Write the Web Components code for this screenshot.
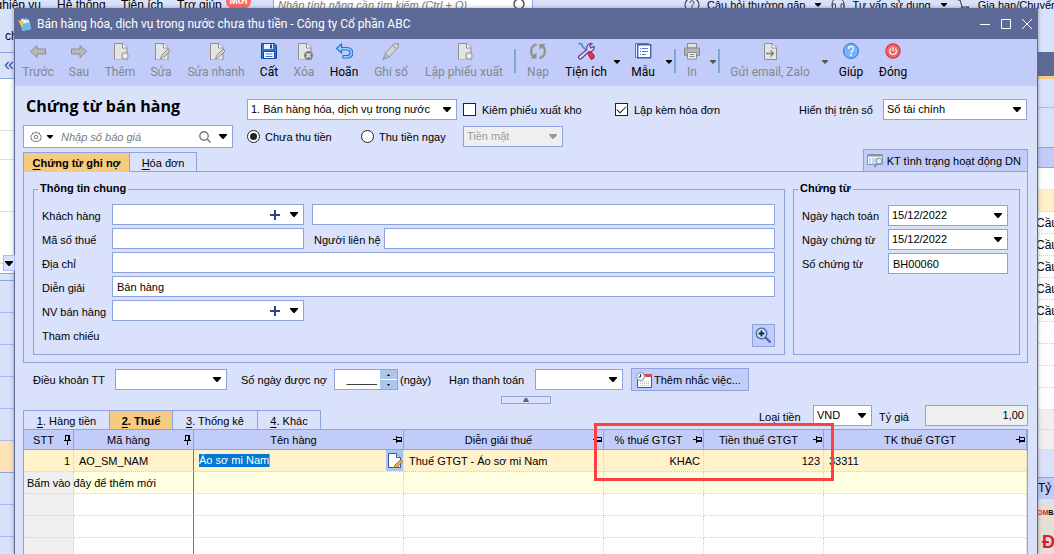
<!DOCTYPE html>
<html lang="vi">
<head>
<meta charset="utf-8">
<title>Bán hàng hóa, dịch vụ trong nước chưa thu tiền</title>
<style>
  :root {
    --ui: "Liberation Sans", Arial, sans-serif;
    --segoe: "Open Sans", "Noto Sans", sans-serif;
    --compact: Roboto, "Open Sans", sans-serif;
    --line: #8ea2e0;
    --face: #dae1fa;
    --bar: #c1cdf8;
    --title: #5d6a98;
    --amber: #f5cb80;
  }
  html, body { height: 100%; }
  body { margin: 0; overflow: hidden; font: 11px/14px var(--ui); color: #000; background: #fff; }
</style>
</head>
<body>
<main-desktop>
  <backdrop-app slot="back"></backdrop-app>
  <app-window caption="Bán hàng hóa, dịch vụ trong nước chưa thu tiền - Công ty Cổ phần ABC">
    <tool-bar slot="tools">
      <tool-item icon="prev" label="Trước" w="40" off></tool-item>
      <tool-item icon="next" label="Sau" w="42" off></tool-item>
      <tool-item icon="add" label="Thêm" w="40" off></tool-item>
      <tool-item icon="edit" label="Sửa" w="42" off></tool-item>
      <tool-item icon="edit" label="Sửa nhanh" w="68" off></tool-item>
      <tool-item icon="save" label="Cất" w="38"></tool-item>
      <tool-item icon="del" label="Xóa" w="32" off></tool-item>
      <tool-item icon="undo" label="Hoãn" w="48"></tool-item>
      <tool-item icon="pen" label="Ghi sổ" w="46" off></tool-item>
      <tool-item icon="add" label="Lập phiếu xuất" w="100" off></tool-item>
      <tool-sep></tool-sep>
      <tool-item icon="reload" label="Nạp" w="44" off></tool-item>
      <tool-item icon="tools" label="Tiện ích" w="52" menu></tool-item>
      <tool-item icon="form" label="Mẫu" w="42" menu></tool-item>
      <tool-sep></tool-sep>
      <tool-item icon="print" label="In" w="32" off menu></tool-item>
      <tool-sep></tool-sep>
      <tool-item icon="send" label="Gửi email, Zalo" w="100" off menu></tool-item>
      <tool-item icon="help" label="Giúp" w="42"></tool-item>
      <tool-item icon="power" label="Đóng" w="42"></tool-item>
    </tool-bar>
    <voucher-head></voucher-head>
    <voucher-info></voucher-info>
    <payment-terms></payment-terms>
    <detail-tabs></detail-tabs>
    <tax-grid></tax-grid>
  </app-window>
</main-desktop>

<script>
const BASE = `
  *, *::before, *::after { box-sizing: border-box; }
  button, input, select { font: inherit; color: inherit; margin: 0; }
  button { border: 0; padding: 0; background: none; display: flex; align-items: center; white-space: nowrap; }
  svg { display: block; flex: none; }
  u { text-underline-offset: 2px; }
`;

class Part extends HTMLElement {
  connectedCallback() {
    if (this.shadowRoot) return;
    const root = this.attachShadow({ mode: 'open' });
    root.innerHTML = `<style>${BASE}${this.css()}</style>${this.html()}`;
  }
  css() { return ':host{display:block}'; }
  html() { return '<slot></slot>'; }
  at(name, fallback = '') { return this.hasAttribute(name) ? this.getAttribute(name) : fallback; }
}

const caret = (color = '#000') =>
  `<svg width="8" height="5" viewBox="0 0 8 5" aria-hidden="true"><path d="M0 0h8v1L4.500 5h-1L0 1z" fill="${color}"/></svg>`;
const smallCaret = (color = '#000') =>
  `<svg width="6" height="4" viewBox="0 0 6 4" aria-hidden="true"><path d="M0 0h6v1L3 4 0 1z" fill="${color}"/></svg>`;

const PAGE = '<path d="M3.500 1.500h8.500l4 4v12.500h-12.500z" fill="#e4e4e4" stroke="#8f8f8f"/><path d="M11.500 1.500v4.500h4.500" fill="#fff" stroke="#8f8f8f"/>';
const ICONS = {
  prev: '<path d="M1.500 9.500 8 3.500v3.500h8.500v5H8v3.500z" fill="#b8b8b8" stroke="#8d8d8d"/>',
  next: '<path d="M16.500 9.500 10 3.500v3.500H1.500v5H10v3.500z" fill="#b8b8b8" stroke="#8d8d8d"/>',
  add: PAGE + '<circle cx="14" cy="14" r="3.200" fill="#ececec" stroke="#adadad" stroke-width="1.500"/>',
  edit: PAGE + '<path d="M8.500 17l1-3.500 6.500-6.500 2 2-6.500 6.500z" fill="#cfcfcf" stroke="#8f8f8f"/>',
  del: PAGE + '<circle cx="13.500" cy="13.500" r="4.500" fill="#7f7f7f"/><path d="M11.500 11.500l4 4m0-4l-4 4" stroke="#eee" stroke-width="1.300"/>',
  save: '<path d="M1.500 1.500h13l2 2v13H1.500z" fill="#2f6fd8" stroke="#1048ac"/><path d="M4 2h9v5H4z" fill="#e9f1ff"/><path d="M10 2.500h2v4h-2z" fill="#1048ac"/><path d="M3.500 9.500h11v7H3.500z" fill="#fff" stroke="#1048ac"/><path d="M5.500 12h7M5.500 14.500h7" stroke="#3c74d0"/>',
  undo: '<path d="M6.500 2 1.500 6.500 6.500 11V8h5.500c4 0 4 5.500 0 5.500H8V16h4.500c7.500 0 7-10.500-.5-10.500H6.500z" fill="#9dccff" stroke="#2374d6" stroke-width="1.200"/>',
  pen: '<path d="M1 17.500l2.500-6.500L12 2l4.500-.5-.5 4L7 15z" fill="#d4d4d4" stroke="#929292"/><path d="M3.500 11l3.500 4M10.500 3.500l4 3.500M1 17.500l4-4" stroke="#929292" fill="none"/>',
  reload: '<path d="M7.500 2.500C1.500 4 1 11.500 4.500 14.500" fill="none" stroke="#8f8f8f" stroke-width="2.600"/><path d="M10.500 16C16.500 14.500 17 7 13.500 4" fill="none" stroke="#8f8f8f" stroke-width="2.600"/><path d="M1.500 16.500h6v-6zM16.500 2h-6v6z" fill="#8f8f8f"/><path d="M6.500 3.500C3 5.500 2.500 10.500 4.500 13M11.500 15C15 13 15.500 8 13.500 5.500" fill="none" stroke="#c4c4c4" stroke-width=".8"/>',
  tools: '<path d="M10 10l2-1.500 5 4.500v3l-3 1.500z" fill="#e8353b" stroke="#a81d2d"/><path d="M1.500 1.500l3 .5 1 2.500L11 10" fill="none" stroke="#5a93dc" stroke-width="2"/><path d="M2 14 10 7.500C9 3.500 11.500 1 15 1.500L12.500 4l1.500 2 3-1.500c.5 3.500-2 5.500-5 5L4.500 16.500c-2 1.500-4-1-2.500-2.500z" fill="#e3d9f5" stroke="#6a3f9c" stroke-width="1.200"/>',
  form: '<path d="M1.500 1.500h13v14h-13z" fill="#e9f0ff" stroke="#4d72c8"/><path d="M3.700 2.700h13v13h-13z" fill="#fff" stroke="#3a60bd" stroke-width="1.400"/><path d="M6 6.500h1m1 0h6M6 9.500h1m1 0h6M6 12.500h1m1 0h4" stroke="#5b7fd4"/>',
  print: '<path d="M4.500 1.500h9V6h-9z" fill="#e2e2e2" stroke="#8d8d8d"/><path d="M1.500 6h15v7.500h-15z" fill="#b4b4b4" stroke="#8a8a8a"/><path d="M4.500 10.500h9v6.500h-9z" fill="#eee" stroke="#8d8d8d"/><path d="M6.500 12.500h5M6.500 14.500h5M3 8h2" stroke="#8d8d8d"/>',
  send: '<path d="M3.500 1.500h8l4 4v12h-12z" fill="#e4e4e4" stroke="#8f8f8f"/><path d="M11 1.500v4.500h4.500" fill="#fff" stroke="#8f8f8f"/><path d="M5 11.500h7M9.500 8.500l3 3-3 3" fill="none" stroke="#7d7d7d" stroke-width="1.300"/>',
  help: '<circle cx="9" cy="9" r="7.500" fill="#74b4fb" stroke="#2c74cf"/><path d="M6.500 7c0-3.500 5-3.300 5-.3 0 2-2.500 2-2.500 4.300" fill="none" stroke="#fff" stroke-width="1.300"/><circle cx="9" cy="13" r=".9" fill="#fff"/>',
  power: '<circle cx="9" cy="9" r="7" fill="#f4696c" stroke="#e5383d" stroke-width="1.400"/><path d="M6.700 6.500c-2.500 2.500-.7 6 2.300 6s4.800-3.500 2.300-6M9 5v4" fill="none" stroke="#fff" stroke-width="1.200"/>'
};

customElements.define('main-desktop', class extends Part {
  css() { return `
    :host { display: block; position: relative; height: 100vh; overflow: hidden; }
    .front { position: absolute; inset: 8px 16px 0 14px; }`; }
  html() { return '<slot name="back"></slot><div class="front"><slot></slot></div>'; }
});

customElements.define('backdrop-app', class extends Part {
  css() { return `
    :host { display: flex; flex-direction: column; height: 100%; background: #fff; }
    header { display: flex; align-items: center; height: 9px; flex: none; background: var(--face);
      font: 12px/14px var(--ui); white-space: nowrap; }
    header span { flex: none; }
    .m1 { width: 57px; display: flex; justify-content: flex-end; padding-right: 16px; }
    .m2 { width: 64px; } .m3 { width: 56px; } .m4 { width: 49px; }
    .new { width: 25px; height: 17px; margin-top: -8px; border-radius: 8px; background: #ff6b63; color: #fff;
      font: bold 10px/17px var(--ui); text-align: center; }
    .find { display: flex; align-items: center; justify-content: space-between; width: 260px; height: 9px; margin-left: 22px; padding: 0 6px 0 4px;
      background: #fff; border: solid var(--line); border-width: 0 1px; color: #777; font-size: 11px; font-style: italic; }
    .links { display: flex; align-items: center; gap: 7px; margin-left: auto; flex: none; width: 370px; font-size: 11px; }
    .links .gap { margin: 0 3px; }
    .sides { flex: 1; display: flex; justify-content: space-between; min-height: 0; overflow: hidden; }
    .left, .right { white-space: nowrap; background: var(--face); }
    .left { width: 15px; }
    .right { width: 17px; font-size: 12px; }
    .left div, .right div { border-bottom: 1px solid #c5cce8; }
    .crumb { height: 44px; padding: 20px 0 0 5px; font-size: 12px; }
    .left .crumb, .left .fold { border-color: var(--line); }
    .fold { height: 26px; padding: 4px 0 0 4px; color: #3559b8; font-size: 18px; line-height: 14px; }
    .left .w { height: 52px; background: #fff; border-color: #ddd; }
    .left .w.short { height: 29px; }
    .left .w.last { height: 10px; border-color: var(--line); }
    .left .drop { display: flex; align-items: center; justify-content: flex-end; width: 12px; height: 16px; margin: -9px 0 -7px 3px; padding-right: 1px;
      background: var(--face); border: 1px solid #aab9ee; position: relative; z-index: 1; overflow: hidden; }
    .left .r { height: 32px; border-color: #aab9ee; }
    .left .r.thin { height: 7px; border-color: var(--line); }
    .left .r.on { background: #ffe3b8; border-color: var(--line); }
    .right .t0 { height: 43px; border: 0; }
    .right .t1 { height: 27px; background: var(--title); border-bottom: 3px solid var(--amber); }
    .right .t2 { height: 29px; border-color: #aab9ee; }
    .right .t3 { height: 40px; border-color: var(--line); }
    .right .t4 { height: 20px; background: var(--bar); border-color: var(--line); }
    .right .row { height: 22px; padding: 3px 0 0 1px; line-height: 16px; background: #fff; border-bottom: 1px dotted #ccc; text-indent: -2px; }
    .right .row.on { background: #fff0c8; }
    .right .row.gray { height: 20px; background: #f0f0f0; }
    .right .t5 { height: 28px; border-color: var(--line); }
    .right .t6 { height: 21px; background: var(--bar); padding-left: 1px; line-height: 20px; }
    .ad { height: 80px; margin-top: 4px; background: #e6dfd5; font: bold 7px/20px var(--ui); }
    .ad b { color: #e3182d; }
    .ad p { margin: 10px 0 0 5px; color: #e3182d; font: bold 18px/18px var(--ui); }`; }
  html() { return `
    <header>
      <span class="m1">Nghiệp vụ</span><span class="m2">Hệ thống</span><span class="m3">Tiện ích</span><span class="m4">Trợ giúp</span>
      <span class="new">Mới</span>
      <span class="find">Nhập tính năng cần tìm kiếm (Ctrl + Q)
        <svg width="14" height="14" viewBox="0 0 14 14"><circle cx="7" cy="6" r="5" fill="none" stroke="#555" stroke-width="1.500"/><path d="M10.500 9.500l3 3" stroke="#555"/></svg></span>
      <div class="links">
        <svg width="16" height="16" viewBox="0 0 16 16"><circle cx="8" cy="8" r="7" fill="none" stroke="#444" stroke-width="1.200"/><path d="M6 6c0-3 4-3 4 0 0 1.500-2 1.500-2 3v2" fill="none" stroke="#444"/></svg>
        <span>Câu hỏi thường gặp</span><i class="gap">${smallCaret()}</i>
        <svg width="14" height="14" viewBox="0 0 14 14"><path d="M1 9V6a6 6 0 0 1 12 0v5l-4 2M1.500 6h3v5h-3zM10 6h3v5h-3z" fill="none" stroke="#444"/></svg>
        <span>Tư vấn sử dụng</span><i class="gap">${smallCaret()}</i>
        <svg width="14" height="14" viewBox="0 0 14 14"><path d="M1 2h2l2 7h7" fill="none" stroke="#333"/><circle cx="5" cy="11" r="1.500" fill="none" stroke="#333"/><circle cx="11" cy="11" r="1.500" fill="none" stroke="#333"/></svg>
        <span>Gia hạn/Chuyển đổi</span>
      </div>
    </header>
    <div class="sides">
      <div class="left">
        <div class="crumb">chủ</div><div class="fold">«</div>
        <div class="w"></div><div class="w short"></div><div class="w"></div><div class="w"></div><div class="drop">${caret()}</div><div class="w last"></div>
        <div class="r thin"></div><div class="r"></div><div class="r"></div><div class="r"></div><div class="r"></div><div class="r"></div>
        <div class="r on"></div><div class="r"></div><div class="r"></div><div class="r"></div>
      </div>
      <div class="right">
        <div class="t0"></div><div class="t1"></div><div class="t2"></div><div class="t3"></div><div class="t4"></div>
        <div class="row"></div><div class="row on"></div>
        <div class="row">Cầu</div><div class="row">Cầu</div><div class="row">Cầu</div><div class="row">Cầu</div><div class="row">Cầu</div>
        <div class="row"></div><div class="row"></div><div class="row"></div><div class="row"></div>
        <div class="row gray"></div><div class="row gray"></div>
        <div class="t5"></div><div class="t6">Tỷ</div>
        <div class="ad"><b>OM</b>BANK<p>ĐÃI</p></div>
      </div>
    </div>`; }
});

customElements.define('app-window', class extends Part {
  css() { return `
    :host { display: flex; flex-direction: column; height: 100%; overflow: hidden; background: var(--face);
      border: solid var(--title); border-width: 0 1px; box-shadow: 0 0 4px #5558; }
    header { display: flex; align-items: center; flex: none; height: 31px; padding: 0 0 0 3px; background: var(--title); color: #fff; }
    h1 { flex: 1; margin: 0 0 0 5px; font: 12px/16px var(--compact); }
    header button { width: 20px; height: 20px; justify-content: center; }
    header nav { display: flex; gap: 1px; }`; }
  html() { return `
    <header>
      <svg width="14" height="14" viewBox="0 0 14 14"><path d="M3 2l8 1 2 9-9 2z" fill="#eef8ff"/><path d="M4 7l7-2 2 7-9 2z" fill="#68b7ee"/><path d="M0 3l6 2-2 6z" fill="#f1c943"/><path d="M5 1v3M8 1v3M10 2v2" stroke="#a8cdec"/></svg>
      <h1>${this.at('caption')}</h1>
      <nav>
        <button aria-label="Thu nhỏ"><svg width="10" height="10"><path d="M0 5.500h10" stroke="#fff"/></svg></button>
        <button aria-label="Phóng to"><svg width="10" height="10"><path d="M.5.5h9v9h-9z" fill="none" stroke="#fff"/></svg></button>
        <button aria-label="Đóng cửa sổ"><svg width="10" height="10"><path d="M0 0l10 10M10 0L0 10" stroke="#fff"/></svg></button>
      </nav>
    </header>
    <slot name="tools"></slot><slot></slot>`; }
});

customElements.define('tool-bar', class extends Part {
  css() { return `:host { display: flex; flex: none; height: 47px; padding: 0 3px; background: var(--bar); overflow: hidden; }`; }
});
customElements.define('tool-sep', class extends Part {
  css() { return `:host { display: block; flex: none; width: 2px; height: 24px; margin-top: 10px; background: #7ea6dc; }`; }
  html() { return ''; }
});
customElements.define('tool-item', class extends Part {
  css() { return `
    :host { display: flex; flex: none; }
    .main { flex-direction: column; justify-content: center; width: ${this.at('w')}px; height: 44px; gap: 4px;
      font: 12px/16px var(--compact); color: #000; }
    .drop { width: 10px; height: 46px; justify-content: center; }
    :host([off]) .main { color: #84878f; }`; }
  html() {
    const off = this.hasAttribute('off') ? 'disabled' : '';
    const drop = this.hasAttribute('menu')
      ? `<button class="drop" ${off} aria-label="Mở menu ${this.at('label')}">${smallCaret(off ? '#555' : '#000')}</button>` : '';
    return `<button class="main" ${off}><svg width="18" height="18" viewBox="0 0 18 18" aria-hidden="true">${ICONS[this.at('icon')]}</svg>${this.at('label')}</button>${drop}`;
  }
});

/* Labelled field: kind = text | select | combo | spin */
customElements.define('form-field', class extends Part {
  css() { return `
    :host { display: flex; align-items: center; height: 21px; min-width: 0; }
    label { flex: none; width: var(--lw, auto); white-space: nowrap; padding-top: var(--drop, 2px); }
    .box { position: relative; display: flex; align-items: center; flex: 1; min-width: 0; height: 21px; background: #fff; border: 1px solid var(--line); }
    input, select { flex: 1; width: 100%; min-width: 0; height: 19px; border: 0; padding: 0 4px; background: none; outline: 0; appearance: none; line-height: 19px; }
    input { padding-top: 1px; }
    select { padding: 0 16px 0 3px; }
    .arrow { position: absolute; right: 5px; top: 7px; pointer-events: none; }
    .add { width: 12px; height: 19px; justify-content: center; color: #33447c; }
    .open { width: 18px; height: 19px; justify-content: center; margin-left: 4px; }
    .spin { display: grid; gap: 1px; width: 17px; height: 19px; }
    .spin button { justify-content: center; background: #abc6ea; height: 9px; }
    :host([right]) input { text-align: right; padding: 0 3px; }
    :host([off]) .box { background: #efefef; }
    :host([off]) select { color: #9b9b9b; opacity: 1; }
    :host([ro]) .box { background: #efefef; }`; }
  html() {
    const k = this.at('kind', 'text'), v = this.at('value'), off = this.hasAttribute('off');
    const name = this.at('label');
    const label = name ? `<label for="c">${name}</label>` : '';
    const aria = name ? '' : `aria-label="${this.at('name')}"`;
    let inner = `<input id="c" ${aria} value="${v}" ${this.hasAttribute('ro') ? 'readonly' : ''}>`;
    if (k === 'select')
      inner = `<select id="c" ${aria} ${off ? 'disabled' : ''}><option>${v}</option></select><span class="arrow">${caret(off ? '#999' : '#000')}</span>`;
    if (k === 'combo')
      inner += `<button class="add" aria-label="Thêm mới"><svg width="10" height="10"><path d="M5 0v10M0 5h10" stroke="#33447c" stroke-width="2"/></svg></button><button class="open" aria-label="Mở danh sách">${caret()}</button>`;
    if (k === 'spin')
      inner += `<div class="spin"><button aria-label="Tăng"><svg width="3" height="2"><path d="M0 2h3L1.500 0z"/></svg></button><button aria-label="Giảm"><svg width="3" height="2"><path d="M0 0h3L1.500 2z"/></svg></button></div>`;
    return `${label}<div class="box">${inner}</div>`;
  }
});

/* Tick box or radio with its text */
customElements.define('check-item', class extends Part {
  css() { return `
    :host { display: block; flex: none; }
    label { display: flex; align-items: center; gap: 6px; white-space: nowrap; }
    :host([type=radio]) label { gap: 5px; }
    input { appearance: none; display: grid; place-items: center; flex: none; width: 13px; height: 13px; border: 1px solid #222; background: #fff; }
    input[type=radio] { border-radius: 50%; }
    input[type=radio]:checked::before { content: ""; width: 7px; height: 7px; border-radius: 50%; background: #222; }
    input[type=checkbox]:checked::before { content: ""; width: 9px; height: 5px; margin-top: -3px; border: solid #222; border-width: 0 0 1px 1px; transform: rotate(-45deg); }`; }
  html() { return `<label><input type="${this.at('type')}" ${this.hasAttribute('on') ? 'checked' : ''}>${this.at('label')}</label>`; }
});

customElements.define('voucher-head', class extends Part {
  css() { return `
    :host { display: grid; flex: none; grid-template-columns: 210px minmax(0, 1fr); gap: 5px 14px; padding: 13px 10px 0 8px; }
    h2 { margin: 0; padding-left: 3px; font: bold 16px/14px var(--segoe); white-space: nowrap; }
    .line { display: flex; align-items: center; height: 21px; }
    .two { height: 23px; }
    .kind { width: 210px; margin-right: 6px; }
    .c1 { width: 152px; } .r1 { width: 114px; } .r2 { width: 102px; }
    .book { width: 228px; margin-left: auto; --lw: 84px; --drop: 0px; }
    .cash { width: 100px; }
    .find { display: flex; align-items: center; height: 23px; padding: 0 5px 0 6px; background: #fff; border: 1px solid var(--line); }
    .find input { flex: 1; min-width: 0; margin: 0 0 0 8px; padding: 0; border: 0; outline: 0; font-style: italic; font-size: 11px; }
    .find input::placeholder { color: #7c7c7c; opacity: 1; }
    .find button { gap: 5px; }
    .find .go { margin-right: 8px; }`; }
  html() { return `
    <h2>Chứng từ bán hàng</h2>
    <div class="line">
      <form-field class="kind" kind="select" name="Loại chứng từ" value="1. Bán hàng hóa, dịch vụ trong nước"></form-field>
      <check-item class="c1" type="checkbox" label="Kiêm phiếu xuất kho"></check-item>
      <check-item type="checkbox" on label="Lập kèm hóa đơn"></check-item>
      <form-field class="book" kind="select" label="Hiển thị trên sổ" value="Sổ tài chính"></form-field>
    </div>
    <div class="find">
      <button aria-label="Thiết lập"><svg width="12" height="12" viewBox="0 0 12 12"><path d="M6 .7l1.300 1.500 2-.3.500 2 1.700 1.100-.9 1.700.4 1.900-2 .6-1.100 1.700L6 10.200l-1.900.7L3 9.200 1 8.600l.4-1.900L.5 5l1.700-1.100.5-2 2 .3z" fill="none" stroke="#777"/><circle cx="6" cy="6" r="1.800" fill="none" stroke="#777"/></svg>${smallCaret()}</button>
      <input aria-label="Nhập số báo giá" placeholder="Nhập số báo giá">
      <button class="go" aria-label="Tìm"><svg width="12" height="12" viewBox="0 0 12 12"><circle cx="5" cy="5" r="4.200" fill="none" stroke="#777" stroke-width="1.400"/><path d="M8 8l3.500 3.500" stroke="#777" stroke-width="1.400"/></svg></button>
      <button aria-label="Mở danh sách">${caret()}</button>
    </div>
    <div class="line two">
      <check-item class="r1" type="radio" on label="Chưa thu tiền"></check-item>
      <check-item class="r2" type="radio" label="Thu tiền ngay"></check-item>
      <form-field class="cash" kind="select" off name="Hình thức" value="Tiền mặt"></form-field>
    </div>`; }
});

const TABS = `
  .tabs { display: flex; align-items: stretch; height: 20px; position: relative; }
  .tabs button { justify-content: center; border: 1px solid var(--line); margin-left: -1px; padding-top: 1px; }
  .tabs button:first-child { margin-left: 0; }
  .tabs .on { background: var(--amber); border-bottom-color: var(--amber); font-weight: bold; }`;

customElements.define('voucher-info', class extends Part {
  css() { return `${TABS}
    :host { display: block; flex: none; padding: 1px 9px 0 8px; }
    .top { display: flex; align-items: flex-end; justify-content: space-between; height: 23px; }
    .t1 { width: 107px; } .t2 { width: 68px; }
    .status { height: 23px; gap: 3px; padding: 0 6px 0 3px; background: var(--bar); border: 1px solid var(--line); font-size: 11px; }
    .panel { display: flex; gap: 8px; margin-top: -1px; padding: 10px 7px 7px 9px; border: 1px solid var(--line); }
    fieldset { display: grid; gap: 3px; margin: 0; min-width: 0; border: 1px solid var(--line); align-content: start; }
    legend { margin-left: -4px; padding: 0 2px; height: 14px; line-height: 12px; font-weight: bold; }
    .main { flex: 1; padding: 8px 9px 7px 8px; --lw: 70px; }
    .doc { width: 227px; padding: 9px 11px 7px 8px; --lw: 86px; --drop: 0px; }
    .row { display: flex; gap: 8px; }
    .half { width: 262px; flex: none; }
    .rest { flex: 1; }
    .who { flex: 1; --lw: 70px; padding-left: 2px; }
    .ref { display: flex; justify-content: space-between; align-items: center; height: 23px; }
    .ref button { width: 23px; height: 23px; justify-content: center; background: var(--bar); border: 1px solid var(--line); }`; }
  html() { return `
    <div class="top">
      <div class="tabs" role="tablist">
        <button class="t1 on" role="tab"><span><u>C</u>hứng từ ghi nợ</span></button><button class="t2" role="tab"><span><u>H</u>óa đơn</span></button>
      </div>
      <button class="status"><svg width="17" height="15" viewBox="0 0 17 15"><path d="M.5 1.500h15v10H.500z" fill="#f3f8fc" stroke="#8d99a8"/><path d="M.5 1.500h15v2H.500z" fill="#8393a4"/><path d="M3 5v6M5 6h4M5 8h4M5 10h3" stroke="#8fb7de"/><circle cx="12" cy="8" r="3" fill="#d7efff" stroke="#7b8ea3"/><path d="M10 10.500L7.500 14" stroke="#7b8ea3" stroke-width="2"/></svg>KT tình trạng hoạt động DN</button>
    </div>
    <div class="panel">
      <fieldset class="main"><legend>Thông tin chung</legend>
        <div class="row"><form-field class="half" kind="combo" label="Khách hàng"></form-field><form-field class="rest" name="Tên khách hàng"></form-field></div>
        <div class="row"><form-field class="half" label="Mã số thuế"></form-field><form-field class="who" label="Người liên hệ"></form-field></div>
        <form-field label="Địa chỉ"></form-field>
        <form-field label="Diễn giải" value="Bán hàng"></form-field>
        <form-field class="half" kind="combo" label="NV bán hàng"></form-field>
        <div class="ref"><span>Tham chiếu</span><button aria-label="Chọn tham chiếu"><svg width="17" height="17" viewBox="0 0 17 17"><path d="M10 10l5.500 5.500" stroke="#4c68b4" stroke-width="2.400"/><circle cx="6.500" cy="6.500" r="5.300" fill="#c2ecfc" stroke="#4a66ac" stroke-width="1.300"/><path d="M6.500 3.500v6M3.500 6.500h6" stroke="#222c40" stroke-width="2"/></svg></button></div>
      </fieldset>
      <fieldset class="doc"><legend>Chứng từ</legend>
        <form-field kind="select" label="Ngày hạch toán" value="15/12/2022"></form-field>
        <form-field kind="select" label="Ngày chứng từ" value="15/12/2022"></form-field>
        <form-field label="Số chứng từ" value="BH00060"></form-field>
      </fieldset>
    </div>`; }
});

customElements.define('payment-terms', class extends Part {
  css() { return `
    :host { display: block; flex: none; padding: 5px 9px 0 18px; --drop: 0px; }
    .row { display: flex; align-items: center; height: 23px; white-space: nowrap; }
    .terms { width: 194px; --lw: 82px; margin-right: 14px; }
    .days { width: 157px; --lw: 93px; }
    .unit { width: 49px; margin-left: 2px; }
    .due { width: 174px; --lw: 86px; margin-right: 8px; }
    .remind { height: 23px; width: 118px; gap: 2px; padding-left: 4px; background: var(--bar); border: 1px solid var(--line); }
    .fold { justify-content: center; width: 50px; height: 8px; margin: 5px auto 0; border: 1px solid var(--line); }
    .mid { display: flex; margin-left: -10px; }`; }
  html() { return `
    <div class="row">
      <form-field class="terms" kind="select" label="Điều khoản TT"></form-field>
      <form-field class="days" kind="spin" right label="Số ngày được nợ" value="_____"></form-field>
      <span class="unit">(ngày)</span>
      <form-field class="due" kind="select" label="Hạn thanh toán"></form-field>
      <button class="remind"><svg width="16" height="16" viewBox="0 0 16 16"><path d="M1.500 3.500h14v12h-14z" fill="#fff" stroke="#3e568f"/><path d="M7 2h9v3H7z" fill="#d94a4a"/><path d="M4 9.500h9M4 11.500h9M4 13.500h9" stroke="#bbb" stroke-dasharray="1 1"/><circle cx="4.500" cy="4.500" r="4" fill="#e9f5ff" stroke="#7d93b5"/><path d="M4.500 2v3h-2" fill="none" stroke="#333"/></svg>Thêm nhắc việc...</button>
    </div>
    <div class="mid"><button class="fold" aria-label="Thu gọn"><svg width="6" height="4"><path d="M0 4h6L4 0H2z" fill="#666"/></svg></button></div>`; }
});

customElements.define('detail-tabs', class extends Part {
  css() { return `${TABS}
    :host { display: flex; flex: none; justify-content: space-between; align-items: flex-end; height: 25px; margin-top: 1px; padding: 0 9px 0 8px; }
    .a { width: 87px; } .b { width: 64px; } .c { width: 86px; } .d { width: 64px; }
    .money { display: flex; gap: 7px; align-self: flex-start; }
    .cur { width: 113px; --lw: 54px; } .rate { width: 149px; --lw: 46px; }`; }
  html() { return `
    <div class="tabs" role="tablist">
      <button class="a" role="tab"><span><u>1</u>. Hàng tiền</span></button><button class="b on" role="tab"><span><u>2</u>. Thuế</span></button><button class="c" role="tab"><span><u>3</u>. Thống kê</span></button><button class="d" role="tab"><span><u>4</u>. Khác</span></button>
    </div>
    <div class="money">
      <form-field class="cur" kind="select" label="Loại tiền" value="VND"></form-field>
      <form-field class="rate" right ro label="Tỷ giá" value="1,00"></form-field>
    </div>`; }
});

const pinDown = '<svg width="9" height="11" viewBox="0 0 9 11" aria-hidden="true"><path d="M2.500 1v5M2.500 1.500h4M1 6.500h7M4.500 7v4" fill="none" stroke="#000"/><path d="M5 1h2v5H5z"/></svg>';
const pinSide = '<svg width="9" height="9" viewBox="0 0 9 9" aria-hidden="true"><path d="M0 4.500h3M3.500 1v7M4 2.500h4.500v3" fill="none" stroke="#000"/><path d="M4 5h5v2H4z"/></svg>';

customElements.define('tax-grid', class extends Part {
  css() { return `
    :host { display: block; position: relative; flex: none; margin: -1px 9px 0 8px; }
    .frame { border: solid var(--line); border-width: 1px 1px 0; background: #fff; }
    table { width: 100%; table-layout: fixed; border-collapse: separate; border-spacing: 0; }
    .s { width: 50px; } .m { width: 120px; } .n { width: 210px; } .d { width: 200px; } .p { width: 100px; } .v { width: 120px; }
    th { height: 20px; padding: 0; font-weight: normal; background: var(--bar); border: solid var(--line); border-width: 0 1px 1px 0; }
    th div { display: flex; align-items: center; padding-right: 1px; }
    th span { flex: 1; }
    td { height: 22px; padding: 0 3px 0 5px; border: dotted #d2d2d2; border-width: 0 1px 1px 0; white-space: nowrap; }
    tbody td:first-child { background: #efefef; padding: 0 3px; }
    tbody td:nth-child(2) { border-right: 1px solid #777; }
    .cur td, tbody .cur td:first-child { background: #fff2cb; }
    .new td:not(:first-child) { background: #ffffe1; }
    .num { text-align: right; }
    .edit { display: flex; align-items: center; justify-content: space-between; height: 21px; margin-right: -3px; }
    .edit input { field-sizing: content; height: 13px; padding: 0; border: 0; border-right: 1px solid #ff8a2b; outline: 0; background: #0078d7; color: #fff; line-height: 13px; }
    .edit button { width: 17px; height: 21px; justify-content: center; background: #abc6ea; }
    .mark { position: absolute; left: 571px; top: -6px; width: 240px; height: 58px; border: 3px solid #fb4143; pointer-events: none; }`; }
  html() {
    const head = [['s', 'STT', pinDown], ['m', 'Mã hàng', pinDown], ['n', 'Tên hàng', pinSide], ['d', 'Diễn giải thuế', pinSide],
      ['p', '% thuế GTGT', pinSide], ['v', 'Tiền thuế GTGT', pinSide], ['t', 'TK thuế GTGT', pinSide]];
    const blank = '<td></td>'.repeat(6);
    return `
    <div class="frame"><table>
      <thead><tr>${head.map(([c, t, p]) => `<th class="${c}"><div><span>${t}</span>${p}</div></th>`).join('')}</tr></thead>
      <tbody>
        <tr class="cur"><td class="num">1</td><td>AO_SM_NAM</td>
          <td><div class="edit"><input aria-label="Tên hàng" value="Áo sơ mi Nam"><button aria-label="Sửa tên hàng"><svg width="16" height="17" viewBox="0 0 16 17"><path d="M1.500 1.500h8l4 4v10h-12z" fill="#fff" stroke="#35569c"/><path d="M9.500 1.500v4h4" fill="#dbe6fa" stroke="#35569c"/><path d="M7 16l1-3 5.500-5 2 2L10 15z" fill="#efb252" stroke="#b0642c"/></svg></button></div></td>
          <td>Thuế GTGT - Áo sơ mi Nam</td><td class="num">KHAC</td><td class="num">123</td><td>33311</td></tr>
        <tr class="new"><td>Bấm vào đây để thêm mới</td>${blank}</tr>
        ${`<tr><td></td>${blank}</tr>`.repeat(3)}
      </tbody>
    </table></div>
    <div class="mark"></div>`;
  }
});
</script>
</body>
</html>
